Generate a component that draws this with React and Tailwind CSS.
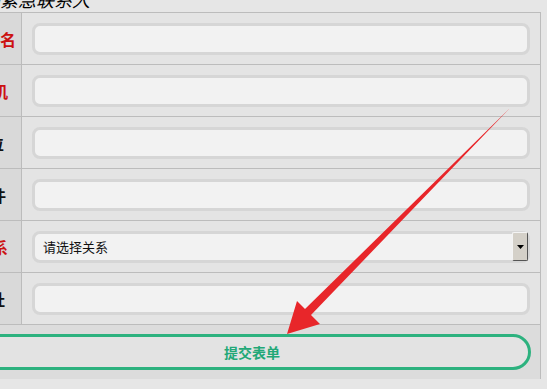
import React from "react";

const fields = [
    { label: "*姓名", required: true, pad: "pr-[5px]" },
    { label: "*手机", required: true, pad: "pr-[13px]" },
    { label: "单位", pad: "pr-[17px]" },
    { label: "邮件", pad: "pr-[15px]" },
    { label: "*关系", required: true, select: true, pad: "pr-[13px]" },
    { label: "地址", pad: "pr-[16px]" },
];

const Arrow = () => (
    <svg className="absolute left-0 top-0 pointer-events-none" width="547" height="389" viewBox="0 0 547 389">
        <polygon
            points="287,334 297,301 305,309 511,107 311,315 320,324"
            fill="#e8262a"
        />
    </svg>
);

const App = () => {
    return (
        <div className="relative w-[547px] h-[389px] overflow-hidden bg-[#e6e6e6]" style={{ fontFamily: '"Noto Sans CJK SC", "Noto Sans", sans-serif' }}>
            <div className="-ml-[40px] w-[581px]">
                {/* title, scrolled partly out of view */}
                <div className="h-[12px] relative">
                    <div className="absolute left-[4px] bottom-[2px] text-[18px] leading-none italic text-black whitespace-nowrap" style={{ fontFamily: '"Liberation Serif", "Noto Sans CJK SC", serif' }}>
                        添加紧急联系人
                    </div>
                </div>
                <div className="border-t border-[#bcbcbc] border-r w-[581px]">
                    {fields.map((f) => (
                        <div key={f.label} className="flex h-[52px] border-b border-[#bcbcbc]">
                            <div className={`w-[62px] bg-[#d9d9d9] border-r border-[#bcbcbc] flex items-center justify-end ${f.pad}`}>
                                <span className={`text-[16px] font-bold whitespace-nowrap ${f.required ? "text-[#cc1111]" : "text-[#111]"}`}>
                                    {f.label}
                                </span>
                            </div>
                            <div className="flex-1 bg-[#e4e4e4] flex items-center pl-[10px] pr-[10px]">
                                {f.select ? (
                                    <div className="w-full h-[32px] rounded-[8px] border-[3px] border-[#d6d6d6] bg-[#f2f2f2] flex items-center justify-between pl-[8px] pr-0">
                                        <span className="text-[13px] text-[#111]">请选择关系</span>
                                        <div className="w-[16px] h-[29px] mr-[-1px] bg-[#d4d0c8] border border-t-[#f4f4f4] border-l-[#f4f4f4] border-r-[#555] border-b-[#555] flex items-center justify-center rounded-[2px]">
                                            <svg width="7" height="4" viewBox="0 0 7 4"><polygon points="0,0 7,0 3.5,4" fill="#000" /></svg>
                                        </div>
                                    </div>
                                ) : (
                                    <div className="w-full h-[32px] rounded-[8px] border-[3px] border-[#d6d6d6] bg-[#f2f2f2]" />
                                )}
                            </div>
                        </div>
                    ))}
                    <div className="h-[54px] bg-[#dcdcdc] pl-[13px] pr-[9px] flex items-center">
                        <div className="w-full h-[36px] rounded-full border-[3px] border-[#2db27f] bg-[#e3e3e3] flex items-center justify-center">
                            <span className="text-[14px] font-bold text-[#22a877]">提交表单</span>
                        </div>
                    </div>
                </div>
            </div>
            <Arrow />
        </div>
    );
};

export default App;
